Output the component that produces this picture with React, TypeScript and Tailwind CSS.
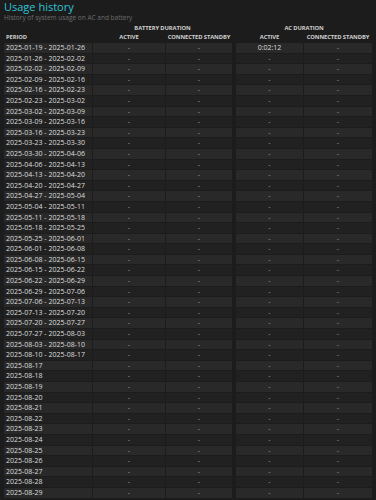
const weeks = [
  '2025-01-19', '2025-01-26', '2025-02-02', '2025-02-09', '2025-02-16', '2025-02-23',
  '2025-03-02', '2025-03-09', '2025-03-16', '2025-03-23', '2025-03-30', '2025-04-06',
  '2025-04-13', '2025-04-20', '2025-04-27', '2025-05-04', '2025-05-11', '2025-05-18',
  '2025-05-25', '2025-06-01', '2025-06-08', '2025-06-15', '2025-06-22', '2025-06-29',
  '2025-07-06', '2025-07-13', '2025-07-20', '2025-07-27', '2025-08-03', '2025-08-10',
  '2025-08-17',
];

const days = [
  '2025-08-17', '2025-08-18', '2025-08-19', '2025-08-20', '2025-08-21', '2025-08-22',
  '2025-08-23', '2025-08-24', '2025-08-25', '2025-08-26', '2025-08-27', '2025-08-28',
  '2025-08-29',
];

const rows = [
  ...weeks.slice(0, -1).map((w, i) => `${w} - ${weeks[i + 1]}`),
  ...days,
];

export default function App() {
  return (
    <div className="min-h-[500px] bg-[#1c1c1c] px-[4px] font-['Open_Sans',sans-serif] text-[#dedede]">
      <h1 className="pt-[1px] text-[11px] leading-[12px] text-[#2ec4d6]">Usage history</h1>
      <p className="mt-[1px] text-[6.5px] leading-[8px] text-[#6c6c6c]">History of system usage on AC and battery</p>

      {/* column headers */}
      <div className="mt-[2px] grid grid-cols-[88px_72px_66px_2px_67px_68px] gap-x-px whitespace-nowrap text-[5.8px] font-bold leading-[9px] tracking-[-0.1px] text-[#cfcfcf]">
        <div />
        <div className="col-span-2 text-center">BATTERY DURATION</div>
        <div />
        <div className="col-span-2 text-center">AC DURATION</div>
        <div className="pl-[2px]">PERIOD</div>
        <div className="text-center">ACTIVE</div>
        <div className="text-center">CONNECTED STANDBY</div>
        <div />
        <div className="text-center">ACTIVE</div>
        <div className="text-center">CONNECTED STANDBY</div>
      </div>

      <div className="mt-[1px] flex flex-col gap-y-px text-[7px] leading-[9.6px]">
        {rows.map((period, i) => {
          const cell = i % 2 === 0 ? 'bg-[#292929]' : 'bg-[#212121]';
          return (
            <div key={period} className="grid h-[9.6px] grid-cols-[88px_72px_66px_2px_67px_68px] gap-x-px whitespace-nowrap">
              <div className={`${cell} pl-[2px]`}>{period}</div>
              <div className={`${cell} text-center text-[#9a9a9a]`}>-</div>
              <div className={`${cell} text-center text-[#9a9a9a]`}>-</div>
              <div />
              <div className={`${cell} text-center ${i === 0 ? '' : 'text-[#9a9a9a]'}`}>{i === 0 ? '0:02:12' : '-'}</div>
              <div className={`${cell} text-center text-[#9a9a9a]`}>-</div>
            </div>
          );
        })}
      </div>
    </div>
  );
}
